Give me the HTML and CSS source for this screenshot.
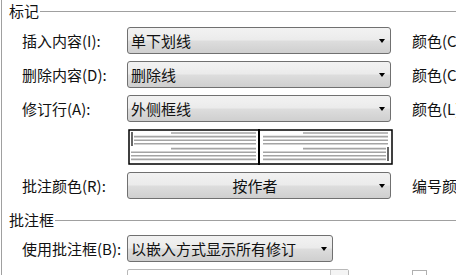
FILE: index.html
```html
<!DOCTYPE html>
<html lang="zh-CN">
<head>
    <meta charset="UTF-8">
    <title>修订选项</title>
    <link rel="stylesheet" href="styles.css">
</head>
<body>
    <div class="panel">
        <div class="legend"><span>标记</span><div class="rule"></div></div>

        <div class="row">
            <label>插入内容(I):</label>
            <div class="select"><span class="value">单下划线</span><span class="arrow"></span></div>
            <span class="side">颜色(C)</span>
        </div>
        <div class="row">
            <label>删除内容(D):</label>
            <div class="select"><span class="value">删除线</span><span class="arrow"></span></div>
            <span class="side">颜色(C)</span>
        </div>
        <div class="row">
            <label>修订行(A):</label>
            <div class="select"><span class="value">外侧框线</span><span class="arrow"></span></div>
            <span class="side">颜色(L)</span>
        </div>

        <div class="preview-row">
            <svg class="preview" width="265" height="36" viewBox="0 0 265 36">
                <rect x="1" y="1" width="263" height="34" fill="#fff" stroke="#000" stroke-width="1.5"/>
                <line x1="131" y1="0" x2="131" y2="36" stroke="#000" stroke-width="2"/>
                <g stroke="#a4a4a4" stroke-width="1.6">
                    <line x1="43" y1="4" x2="128" y2="4"/>
                    <line x1="6" y1="7.6" x2="128" y2="7.6"/>
                    <line x1="6" y1="11.2" x2="128" y2="11.2"/>
                    <line x1="6" y1="14.8" x2="128" y2="14.8"/>
                    <line x1="43" y1="19.6" x2="128" y2="19.6"/>
                    <line x1="3" y1="23.2" x2="128" y2="23.2"/>
                    <line x1="3" y1="26.8" x2="128" y2="26.8"/>
                    <line x1="3" y1="30.4" x2="128" y2="30.4"/>

                    <line x1="175" y1="4" x2="260" y2="4"/>
                    <line x1="135" y1="7.6" x2="260" y2="7.6"/>
                    <line x1="135" y1="11.2" x2="260" y2="11.2"/>
                    <line x1="135" y1="14.8" x2="260" y2="14.8"/>
                    <line x1="175" y1="19.6" x2="258" y2="19.6"/>
                    <line x1="135" y1="23.2" x2="258" y2="23.2"/>
                    <line x1="135" y1="26.8" x2="258" y2="26.8"/>
                    <line x1="135" y1="30.4" x2="258" y2="30.4"/>
                </g>
                <line x1="4" y1="3" x2="4" y2="17" stroke="#000" stroke-width="1.2"/>
                <line x1="260" y1="18" x2="260" y2="32" stroke="#000" stroke-width="1.2"/>
            </svg>
        </div>

        <div class="row">
            <label>批注颜色(R):</label>
            <div class="select center"><span class="value">按作者</span><span class="arrow"></span></div>
            <span class="side">编号颜色</span>
        </div>

        <div class="legend second"><span>批注框</span><div class="rule"></div></div>

        <div class="row">
            <label>使用批注框(B):</label>
            <div class="select narrow"><span class="value">以嵌入方式显示所有修订</span><span class="arrow"></span></div>
        </div>

        <div class="row last">
            <label></label>
            <div class="field"><span class="spin"></span></div>
            <span class="check"></span>
        </div>
    </div>
</body>
</html>
```

FILE: styles.css
```css
html, body {
    margin: 0;
    padding: 0;
    background: #fff;
    overflow: hidden;
}
body {
    font-family: "Noto Sans CJK SC", "Liberation Sans", sans-serif;
    font-size: 15px;
    color: #111;
}
.panel {
    margin-left: 1px;
    border-left: 1px solid #a0a0a0;
    height: 275px;
    overflow: hidden;
}
.legend {
    display: flex;
    align-items: center;
    height: 22px;
    padding-left: 7px;
}
.legend span { line-height: 22px; }
.legend .rule {
    flex: 1;
    margin-left: 1px;
    border-top: 1px solid #a0a0a0;
}
.legend.second { margin-top: 10px; margin-bottom: 4px; }
.legend:first-child { margin-bottom: 5px; }

.row {
    display: grid;
    grid-template-columns: 105px 264px 1fr;
    align-items: center;
    padding-left: 20px;
    height: 27px;
    margin-bottom: 7px;
    white-space: nowrap;
}
.row label { line-height: 27px; }
.side {
    margin-left: 21px;
    overflow: hidden;
}

.select {
    box-sizing: border-box;
    height: 27px;
    display: flex;
    align-items: center;
    border: 1px solid #707070;
    border-radius: 3px;
    background: linear-gradient(#f2f2f2 0%, #ebebeb 48%, #dddddd 52%, #cfcfcf 100%);
    padding: 0 5px 0 3px;
}
.select .value { flex: 1; }
.select.center .value { text-align: center; }
.select.narrow { width: 206px; }
.arrow {
    width: 0;
    height: 0;
    border-left: 3.5px solid transparent;
    border-right: 3.5px solid transparent;
    border-top: 4px solid #000;
}

.preview-row {
    padding-left: 126px;
    height: 36px;
    margin-bottom: 7px;
}
.preview { display: block; }

.row.last {
    align-items: start;
    margin-bottom: 0;
}
.field {
    box-sizing: border-box;
    width: 222px;
    height: 27px;
    border: 1px solid #b8b8b8;
    border-radius: 2px;
    display: flex;
    justify-content: flex-end;
}
.spin {
    width: 17px;
    border-left: 1px solid #c8c8c8;
    background: #f4f4f4;
}
.check {
    width: 15px;
    height: 15px;
    margin-top: 1px;
    margin-left: 21px;
    border: 1px solid #b0b0b0;
    box-sizing: border-box;
}
```
